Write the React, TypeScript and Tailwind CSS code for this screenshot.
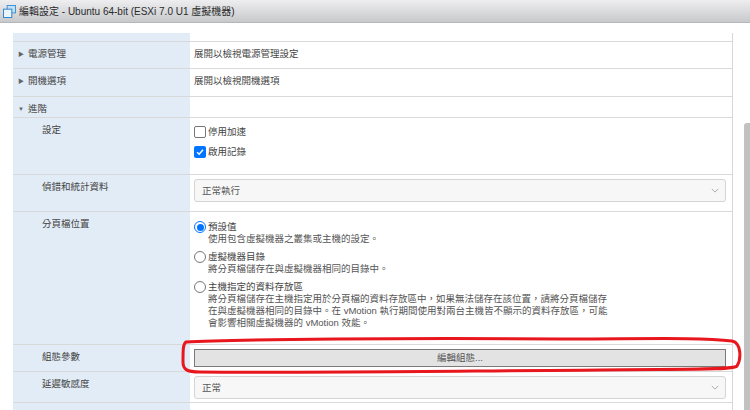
import React from "react";

const FONT = { fontFamily: '"Liberation Sans", "Noto Sans CJK TC", sans-serif' };

function Row({
  label,
  indent,
  arrow,
  h,
  children,
}: {
  label?: string;
  indent?: boolean;
  arrow?: "right" | "down";
  h: string;
  children?: React.ReactNode;
}) {
  return (
    <div className={`flex border-b border-[#d9d9d9] ${h}`}>
      <div className="flex w-[177px] shrink-0 bg-[#e2ecf6] pt-[6px] text-[9.5px] leading-[12px] text-[#444]">
        {arrow ? (
          <span className="flex w-[14px] justify-center pl-[2px] text-[6px] leading-[12px] text-[#666]">
            {arrow === "right" ? "▶" : "▼"}
          </span>
        ) : null}
        {label ? (
          <span className={indent ? "pl-[29px]" : "pl-[1px]"}>{label}</span>
        ) : null}
      </div>
      <div className="min-w-0 flex-1 pl-[4px] pr-[6px] text-[9.5px] leading-[12px] text-[#444]">
        {children}
      </div>
    </div>
  );
}

function Checkbox({ checked }: { checked?: boolean }) {
  return checked ? (
    <span className="flex h-[12px] w-[12px] items-center justify-center rounded-[2px] bg-[#0075ff]">
      <svg viewBox="0 0 12 12" className="h-[10px] w-[10px]">
        <path d="M2.5 6.2 L5 8.6 L9.6 3.2" fill="none" stroke="#fff" strokeWidth="1.8" />
      </svg>
    </span>
  ) : (
    <span className="h-[12px] w-[12px] rounded-[2px] border border-[#767676] bg-white" />
  );
}

function Radio({ checked }: { checked?: boolean }) {
  return checked ? (
    <span className="flex h-[12px] w-[12px] shrink-0 items-center justify-center rounded-full border border-[#0075ff] bg-white">
      <span className="h-[7px] w-[7px] rounded-full bg-[#0075ff]" />
    </span>
  ) : (
    <span className="h-[12px] w-[12px] shrink-0 rounded-full border border-[#767676] bg-white" />
  );
}

function Select({ value }: { value: string }) {
  return (
    <div className="flex h-[23px] items-center justify-between rounded-[3px] border border-[#d4d4d4] bg-[#f7f7f7] pl-[7px] pr-[6px] text-[9.5px] text-[#555]">
      <span>{value}</span>
      <svg viewBox="0 0 10 6" className="h-[5px] w-[8px]">
        <path d="M1 1 L5 5 L9 1" fill="none" stroke="#999" strokeWidth="1" />
      </svg>
    </div>
  );
}

function RadioOption({
  checked,
  title,
  lines,
}: {
  checked?: boolean;
  title: string;
  lines: string[];
}) {
  return (
    <div className="flex gap-[2px]">
      <div className="flex w-[12px] flex-col">
        <Radio checked={checked} />
      </div>
      <div className="text-[9.5px] leading-[12px] text-[#444]">
        <div>{title}</div>
        {lines.map((l, i) => (
          <div key={i} className="text-[#555]">
            {l}
          </div>
        ))}
      </div>
    </div>
  );
}

export default function App() {
  return (
    <div className="relative h-[410px] w-[750px] overflow-hidden bg-white" style={FONT}>
      {/* Title bar */}
      <div className="flex h-[23px] items-center gap-[3px] border-b border-[#b5b6b9] bg-gradient-to-b from-[#eeeef0] to-[#c8c9cc] pl-[3px]">
        <svg viewBox="0 0 14 14" className="h-[13px] w-[13px]">
          <rect x="4.5" y="0.5" width="9" height="8" fill="#bfe0f7" stroke="#3d8fd1" />
          <rect x="0.5" y="4.5" width="9" height="9" fill="#e9f5fd" stroke="#2d7fc7" />
        </svg>
        <span className="text-[10px] text-[#2a2a2a]">
          編輯設定 - Ubuntu 64-bit (ESXi 7.0 U1 虛擬機器)
        </span>
      </div>

      <div className="flex">
        <div className="flex-1 pl-[13px] pr-[11px] pt-[10px]">
          <div className="border-r border-[#d6d6d6]">
            <Row h="h-[9px]" />
            <Row label="電源管理" arrow="right" h="h-[27px]">
              <div className="pt-[6px]">展開以檢視電源管理設定</div>
            </Row>
            <Row label="開機選項" arrow="right" h="h-[28px]">
              <div className="pt-[6px]">展開以檢視開機選項</div>
            </Row>
            <Row label="進階" arrow="down" h="h-[21px]" />
            <Row label="設定" indent h="h-[57px]">
              <div className="flex flex-col gap-[8px] pt-[8px]">
                <label className="flex items-center gap-[2px]">
                  <Checkbox />
                  <span>停用加速</span>
                </label>
                <label className="flex items-center gap-[2px]">
                  <Checkbox checked />
                  <span>啟用記錄</span>
                </label>
              </div>
            </Row>
            <Row label="偵錯和統計資料" indent h="h-[37px]">
              <div className="pt-[4px]">
                <Select value="正常執行" />
              </div>
            </Row>
            <Row label="分頁檔位置" indent h="h-[133px]">
              <div className="flex flex-col gap-[6px] pt-[9px]">
                <RadioOption checked title="預設值" lines={["使用包含虛擬機器之叢集或主機的設定。"]} />
                <RadioOption title="虛擬機器目錄" lines={["將分頁檔儲存在與虛擬機器相同的目錄中。"]} />
                <RadioOption
                  title="主機指定的資料存放區"
                  lines={[
                    "將分頁檔儲存在主機指定用於分頁檔的資料存放區中，如果無法儲存在該位置，請將分頁檔儲存",
                    "在與虛擬機器相同的目錄中。在 vMotion 執行期間使用對兩台主機皆不顯示的資料存放區，可能",
                    "會影響相關虛擬機器的 vMotion 效能。",
                  ]}
                />
              </div>
            </Row>
            <Row label="組態參數" indent h="h-[27px]">
              <div className="pt-[4px]">
                <button className="flex h-[18px] w-full items-center justify-center border border-[#7a7a7a] bg-[#e3e3e3] text-[9.5px] text-[#555]">
                  編輯組態...
                </button>
              </div>
            </Row>
            <Row label="延遲敏感度" indent h="h-[31px]">
              <div className="pt-[4px]">
                <Select value="正常" />
              </div>
            </Row>
            <Row h="h-[20px]" />
          </div>
        </div>
        {/* Scrollbar */}
        <div className="w-[6px] pt-[100px]">
          <div className="h-[300px] rounded-tl-[3px] bg-[#c1c1c1]" />
        </div>
      </div>

      {/* Red annotation */}
      <svg className="pointer-events-none absolute left-0 top-0" width="750" height="410" viewBox="0 0 750 410">
        <path
          d="M186 342 C 230 339, 420 338, 560 339 C 640 339, 700 337, 732 341 C 742 343, 741 360, 737 366 C 734 370, 690 369, 600 370 C 450 371, 300 373, 200 372 C 186 372, 183 369, 183 362 C 183 350, 183 344, 186 342 Z"
          fill="none"
          stroke="#e8161d"
          strokeWidth="3"
        />
      </svg>
    </div>
  );
}
